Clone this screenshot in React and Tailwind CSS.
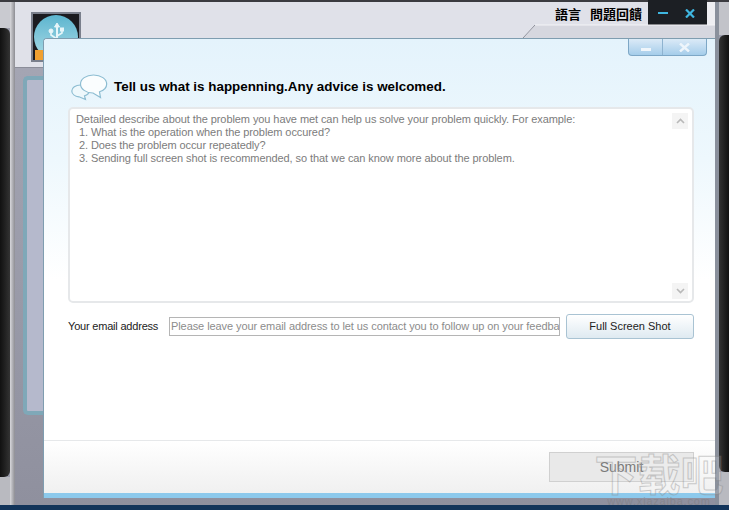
import React from 'react';

const BODY = 'font-["Liberation_Sans",sans-serif]';

const BubbleIcon = () => (
  <svg width="38" height="27" viewBox="0 0 38 27" fill="none" stroke="#8dbdd2" strokeWidth="1.2">
    <path d="M9.5 11 C4.5 11 0.8 13.8 0.8 17 C0.8 20 3.8 22.4 8 22.8 L14.5 25.5 L13.5 21.8 C16.5 20.8 18.2 19 18.2 17 C18.2 13.8 14.5 11 9.5 11 Z" fill="#eef8fc" />
    <path d="M22.5 1 C15 1 9.5 5 9.5 10 C9.5 15 15 19 22 19 L29.5 23.5 L28.5 17.8 C33 16.4 35.7 13.4 35.7 10 C35.7 5 30 1 22.5 1 Z" fill="#fafdfe" />
  </svg>
);

const AppLogo = () => (
  <div className="w-[50px] h-[50px] bg-[#1b1b20] border-2 border-[#7a7f8c] relative overflow-hidden">
    <div className="w-[44px] h-[44px] rounded-full bg-gradient-to-b from-[#5bb5cf] to-[#a9dbe6] ml-[1px] mt-[1px] flex justify-center">
      <svg width="20" height="24" viewBox="0 0 20 24" className="mt-[6px]" fill="#e6f5f9" stroke="#e6f5f9">
        <path d="M11 2 L8.5 6 H13.5 Z" />
        <path d="M11 5 V21" strokeWidth="2" fill="none" />
        <path d="M11 18 L5 14 V11 M11 15 L16 12 V9" strokeWidth="1.6" fill="none" />
        <circle cx="5" cy="10" r="2" />
        <rect x="14.5" y="7" width="3" height="3" />
      </svg>
    </div>
    <div className="absolute left-[2px] bottom-0 w-[14px] h-[10px] bg-[#f0a030]" />
  </div>
);

const Sidebar = () => (
  <div className="ml-[8px] mt-[8px] h-[339px] flex-none rounded-l-[5px] border-l-[4px] border-y-[4px] border-[#7fa8b8] bg-[#b5b9cc]" />
);

const ScrollArrow = ({ up }) => (
  <div className="w-[16px] h-[16px] bg-[#f4f4f4] flex items-center justify-center">
    <svg width="9" height="6" viewBox="0 0 9 6" fill="none" stroke="#b9b9b9" strokeWidth="1.6">
      <path d={up ? 'M1 5 L4.5 1.5 L8 5' : 'M1 1 L4.5 4.5 L8 1'} />
    </svg>
  </div>
);

const Dialog = () => (
  <div className="absolute left-[43px] top-[38px] w-[672px] h-[460px] flex flex-col bg-white border-l border-t border-[#7f9db0] rounded-tl-[4px] overflow-hidden">
    <div className="flex-1 flex flex-col bg-gradient-to-b from-[#e4f3fc] via-[#eef8fd] via-30% to-white to-60% pl-[24px] pr-[21px] relative">
      <div className="absolute right-[8px] top-0 w-[79px] h-[17px] flex rounded-b-[4px] border border-t-0 border-[#7da7c6] bg-gradient-to-b from-[#dbeaf7] to-[#a5cdea]">
        <div className="w-[34px] border-r border-[#8eb3d0] flex items-center justify-center pt-[4px]">
          <div className="w-[10px] h-[3px] bg-[#f0f6fb]" />
        </div>
        <div className="flex-1 flex items-center justify-center">
          <svg width="11" height="9" viewBox="0 0 11 9" stroke="#eef5fb" strokeWidth="2.4">
            <path d="M1 0.5 L10 8.5 M10 0.5 L1 8.5" />
          </svg>
        </div>
      </div>

      <div className="flex items-center gap-[5px] mt-[34px] ml-[3px] h-[28px]">
        <BubbleIcon />
        <h1 className={`text-[13.4px] font-bold text-black ${BODY}`}>Tell us what is happenning.Any advice is welcomed.</h1>
      </div>

      <div className="mt-[6px] h-[196px] bg-white border-2 border-[#e6e8ea] rounded-[5px] flex pl-[6px] pt-[4px] pr-[4px] pb-[2px]">
        <p className={`flex-1 text-[11px] tracking-[-0.08px] leading-[13px] text-[#7c7c7c] ${BODY}`}>
          Detailed describe about the problem you have met can help us solve your problem quickly. For example:<br />
          &nbsp;1. What is the operation when the problem occured?<br />
          &nbsp;2. Does the problem occur repeatedly?<br />
          &nbsp;3. Sending full screen shot is recommended, so that we can know more about the problem.
        </p>
        <div className="flex flex-col justify-between">
          <ScrollArrow up />
          <ScrollArrow />
        </div>
      </div>

      <div className="flex items-center mt-[11px]">
        <span className={`w-[101px] text-[11px] tracking-[-0.2px] text-[#222] whitespace-nowrap ${BODY}`}>Your email address</span>
        <div className={`w-[391px] h-[19px] border border-[#b5b5b5] bg-white overflow-hidden whitespace-nowrap pl-[1px] text-[11px] tracking-[-0.08px] leading-[17px] text-[#8c8c8c] ${BODY}`}>
          Please leave your email address to let us contact you to follow up on your feedback
        </div>
        <button className={`ml-[6px] w-[128px] h-[25px] rounded-[3px] border border-[#a9c3d3] bg-gradient-to-b from-[#ffffff] to-[#dfeaf1] text-[11px] text-[#222] ${BODY}`}>
          Full Screen Shot
        </button>
      </div>
    </div>

    <div className="h-[53px] border-t border-[#e6e8ea] bg-gradient-to-b from-white to-[#f0f0f0] flex justify-end pr-[21px] pt-[11px]">
      <button className={`w-[145px] h-[30px] pt-[1px] bg-[#e9e9e9] border border-[#d0d0d0] text-[14px] text-[#7a7a7a] ${BODY}`}>
        Submit
      </button>
    </div>
    <div className="h-[5px] bg-[#8cc9ec]" />
  </div>
);

const Watermark = () => (
  <div className="absolute right-[6px] bottom-[3px] w-[128px] flex flex-col items-center opacity-40 pointer-events-none">
    <span className="text-[43px] leading-[46px] font-bold text-white/40 [-webkit-text-stroke:1px_#8a8a8a] whitespace-nowrap font-['Noto_Sans_CJK_SC',sans-serif]">下载吧</span>
    <span className="text-[11px] leading-[12px] tracking-[0.8px] text-[#777] font-['Liberation_Sans',sans-serif]">www.xiazaiba.com</span>
  </div>
);

const TabCorner = () => (
  <svg className="absolute left-[520px] top-[24px]" width="195" height="14" viewBox="0 0 195 14">
    <path d="M3 14 L15 1 H195 V14 Z" fill="#d6d7df" />
    <path d="M3 14 L15 1 H195" fill="none" stroke="#f4f4f7" strokeWidth="1" />
    <path d="M3 14 L15 1" fill="none" stroke="#8b8d99" strokeWidth="1" />
  </svg>
);

export default function App() {
  return (
    <div className="relative w-[729px] h-[510px] overflow-hidden bg-[#12345a] flex flex-col">
      <div className="h-[505px] flex border-t-[2px] border-[#3b3b40] bg-[#9a9cab]">
        <div className="w-[10px] flex flex-col">
          <div className="h-[26px] bg-[#c9cad0]" />
          <div className="flex-1 bg-gradient-to-r from-[#111] to-[#333] rounded-tr-[6px] rounded-br-[6px]" />
          <div className="h-[28px] bg-[#b9bac0]" />
        </div>
        <div className="w-[5px] bg-gradient-to-r from-[#d8d8dc] to-[#8d8d93]" />
        <div className="flex-1 flex flex-col">
          <div className="h-[66px] flex bg-[#e0e1e9] border-b border-[#8b8d99]">
            <div className="ml-[16px] mt-[10px]">
              <AppLogo />
            </div>
            <div className="flex-1" />
            <div className="flex h-[24px] self-start items-center">
              <span className="text-[13px] font-bold text-black font-['Noto_Sans_CJK_TC',sans-serif] mr-[9px]">語言</span>
              <span className="text-[13px] font-bold text-black font-['Noto_Sans_CJK_TC',sans-serif] mr-[6px]">問題回饋</span>
              <div className="w-[59px] h-[26px] -mt-[2px] bg-[#1c1f24] flex items-center justify-between pl-[10px] pr-[12px]">
                <div className="w-[10px] h-[2px] bg-[#3fb6e0]" />
                <svg width="10" height="9" viewBox="0 0 10 9" stroke="#3fb6e0" strokeWidth="2.2">
                  <path d="M1 0.5 L9 8.5 M9 0.5 L1 8.5" />
                </svg>
              </div>
              <div className="w-[8px] h-[24px] bg-[#eeeef2]" />
            </div>
          </div>
          <div className="flex-1 flex flex-col bg-gradient-to-b from-[#a4a5b3] to-[#8f909e]">
            <div className="w-[28px] flex flex-col">
              <Sidebar />
            </div>
          </div>
        </div>
        <div className="w-[4px] bg-[#8a909c]" />
        <div className="w-[10px] flex flex-col">
          <div className="h-[33px] bg-[#c2c3c9]" />
          <div className="flex-1 bg-gradient-to-r from-[#333] to-[#111] rounded-tl-[6px] rounded-bl-[6px]" />
          <div className="h-[33px] bg-[#b9bac0]" />
        </div>
      </div>
      <TabCorner />
      <Dialog />
      <Watermark />
    </div>
  );
}
